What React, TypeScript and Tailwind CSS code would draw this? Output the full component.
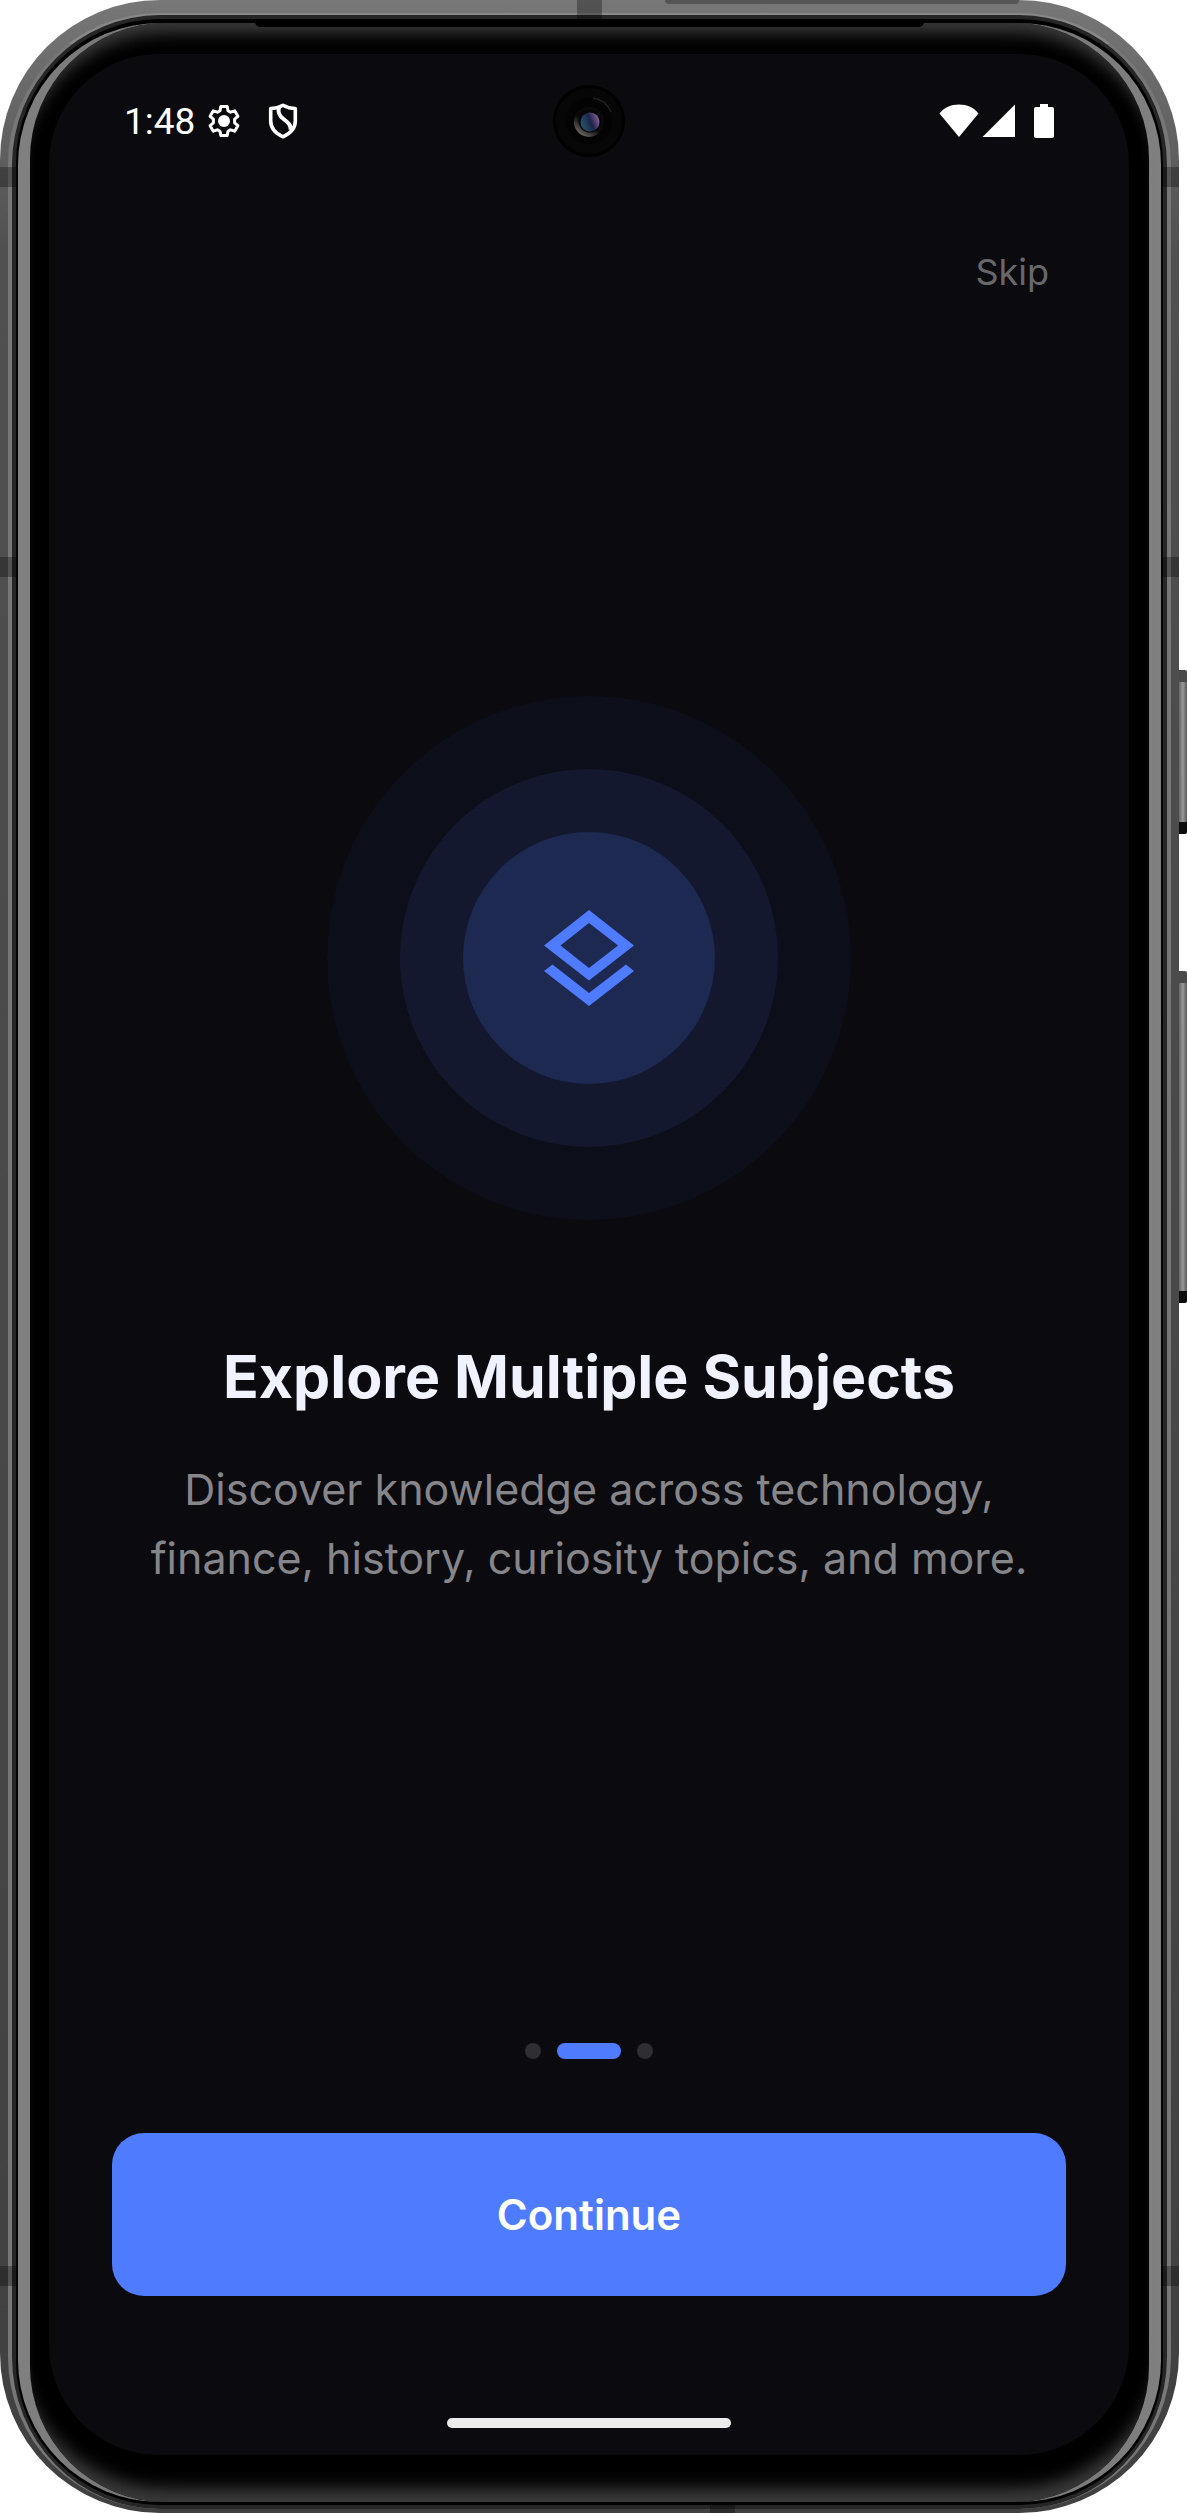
import React from 'react';

const GearIcon = () => (
  <svg width="34" height="34" viewBox="0 0 34 34" fill="none" aria-hidden="true">
    <path
      d="M13.800 2.500h6.400l.8 4.200 2.600 1.500 4.100-1.400 3.200 5.500-3.300 2.900v3.600l3.300 2.900-3.200 5.500-4.100-1.400-2.600 1.500-.8 4.200h-6.400l-.8-4.200-2.600-1.500-4.100 1.400-3.200-5.500 3.300-2.900v-3.600l-3.300-2.900 3.200-5.500 4.100 1.400L13 6.700z"
      stroke="white"
      strokeWidth="3"
      strokeLinejoin="round"
    />
    <circle cx="17" cy="17" r="6" fill="white" />
  </svg>
);

const ShieldIcon = () => (
  <svg width="30" height="36" viewBox="0 0 30 36" fill="none" aria-hidden="true">
    <path
      d="M15 2.200C19 4.500 23 5.500 27.300 5.500V18c0 7-5 12.500-12.300 15.800C7.700 30.500 2.700 25 2.700 18V5.500C7 5.500 11 4.500 15 2.200z"
      stroke="white"
      strokeWidth="3.600"
      strokeLinejoin="round"
    />
    <path d="M11 4c-1.500 6 .5 9 4.500 12s8 6 7 11" stroke="white" strokeWidth="4" />
  </svg>
);

const WifiIcon = () => (
  <svg width="40" height="34" viewBox="0 0 40 34" aria-hidden="true">
    <path d="M20 33 .5 9.500C5 3.500 12 .5 20 .5s15 3 19.500 9z" fill="white" />
  </svg>
);

const SignalIcon = () => (
  <svg width="33" height="34" viewBox="0 0 33 34" aria-hidden="true">
    <path d="M33 .5V33H.5z" fill="white" />
  </svg>
);

const BatteryIcon = () => (
  <svg width="20" height="34" viewBox="0 0 20 34" aria-hidden="true">
    <path d="M6 0h8v3h4a2 2 0 0 1 2 2v27a2 2 0 0 1-2 2H2a2 2 0 0 1-2-2V5a2 2 0 0 1 2-2h4z" fill="white" />
  </svg>
);

const LayersIcon = () => (
  <svg width="90" height="96" viewBox="0 0 90 96" aria-hidden="true">
    <path fillRule="evenodd" d="M45 0l45 35.500L45 70.500 0 35.500zM45 13L16.500 35.500 45 58l29-22.500z" fill="#4f7cff" />
    <path d="M8.500 54.500L45 83l37-28.500 8 6.500-45 35L0 61z" fill="#4f7cff" />
  </svg>
);

const Camera = () => (
  <svg width="72" height="72" viewBox="0 0 72 72" aria-hidden="true">
    <defs>
      <linearGradient id="lens" x1="0" y1="0.700" x2="1" y2="0.300">
        <stop offset="0" stopColor="#245a70" />
        <stop offset="0.550" stopColor="#1d2348" />
        <stop offset="1" stopColor="#8d62a0" />
      </linearGradient>
      <linearGradient id="rim" x1="0.200" y1="1" x2="0.700" y2="0.300">
        <stop offset="0" stopColor="#777470" />
        <stop offset="0.600" stopColor="#0a0a0a" />
      </linearGradient>
    </defs>
    <circle cx="36" cy="36" r="34.500" fill="#060606" stroke="#000000" strokeWidth="3" />
    <circle cx="36" cy="36" r="23" fill="#030303" />
    <path d="M40 13a23 23 0 0 1 18 14" fill="none" stroke="#222222" strokeWidth="1.500" />
    <circle cx="36" cy="37" r="15" fill="url(#rim)" />
    <circle cx="37" cy="36" r="11.500" fill="#050508" />
    <circle cx="37" cy="37" r="9.500" fill="url(#lens)" />
  </svg>
);

const StatusBar = () => (
  <div className="grid grid-cols-3 items-center px-[75px] pt-[31px]">
    <div className="flex items-center">
      <span className="font-[Roboto,sans-serif] text-[37px] leading-none text-white">1:48</span>
      <div className="ml-3 flex items-center gap-[27px]">
        <GearIcon />
        <ShieldIcon />
      </div>
    </div>
    <div className="flex justify-center">
      <Camera />
    </div>
    <div className="flex items-center justify-end">
      <WifiIcon />
      <div className="mr-[19px] ml-[3px]">
        <SignalIcon />
      </div>
      <BatteryIcon />
    </div>
  </div>
);

const Hero = () => (
  <div className="flex size-[524px] items-center justify-center rounded-full bg-[#0c0e19]">
    <div className="flex size-[378px] items-center justify-center rounded-full bg-[#13182e]">
      <div className="flex size-[252px] items-center justify-center rounded-full bg-[#1d2951]">
        <LayersIcon />
      </div>
    </div>
  </div>
);

const Screen = () => (
  <main className="flex grow flex-col rounded-[110px] bg-[#0a0a0f] font-[Inter,sans-serif]">
    <StatusBar />
    <div className="flex justify-end pt-[88px] pr-[80px]">
      <button type="button" className="text-[36px] leading-[54px] text-[#68686c]">
        Skip
      </button>
    </div>
    <section className="flex grow flex-col items-center pt-[397px] text-center">
      <Hero />
      <h1 className="mt-[115px] text-[59px] leading-[84px] font-bold text-[#f0f2ff]">Explore Multiple Subjects</h1>
      <p className="mt-[36px] text-[43px] leading-[69px] text-[#86868a]">
        Discover knowledge across technology,
        <br />
        finance, history, curiosity topics, and more.
      </p>
    </section>
    <div className="flex flex-col items-center px-[63px] pb-[27px]">
      <div className="flex gap-4">
        <span className="size-4 rounded-full bg-[#2f2f33]" />
        <span className="h-4 w-16 rounded-full bg-[#4f7cff]" />
        <span className="size-4 rounded-full bg-[#2f2f33]" />
      </div>
      <button
        type="button"
        className="mt-[74px] h-[163px] w-full rounded-[32px] bg-[#4f7cff] text-[42px] font-semibold text-white"
      >
        Continue
      </button>
      <div className="mt-[122px] h-[10px] w-[284px] rounded-full bg-[#ececec]" />
    </div>
  </main>
);

// Antenna break in the metal frame
const Seam = ({ className }: { className: string }) => (
  <span className={`absolute bg-black/30 ${className}`} />
);

const SideButton = ({ className }: { className: string }) => (
  <span
    className={`absolute right-0 w-2 rounded-r-xs border-y-[12px] border-t-[#4a4a4a] border-b-[#0c0c0c] bg-linear-to-r from-[#666666] via-[#999999] to-[#555555] ${className}`}
  />
);

export default function App() {
  return (
    <div className="relative flex min-h-screen bg-white pr-2">
      <SideButton className="top-[670px] h-[164px]" />
      <SideButton className="top-[971px] h-[332px]" />
      {/* Metal frame */}
      <div className="relative flex grow rounded-[160px] bg-linear-to-b from-[#777777] via-[#505050] via-10% to-[#404040] px-2 pt-[13px] pb-1">
        <div className="flex grow rounded-[152px] border-x-4 border-t-2 border-x-[#777777] border-t-[#888888] bg-[#262626] p-[4px]">
          <div className="flex grow rounded-[144px] bg-black px-[2px] pt-[4px] pb-[3px]">
            {/* Polished inner rim, tapering off towards the top and bottom */}
            <div className="flex grow rounded-[142px] bg-linear-to-r from-[#808080] via-[#555555] to-[#808080] px-3">
              <div className="flex grow rounded-[136px] bg-black pt-[31px] pr-[20px] pb-[47px] pl-[19px] shadow-[inset_0_22px_16px_-12px_#3a3a3a,inset_0_-26px_16px_-12px_#3a3a3a]">
                <Screen />
              </div>
            </div>
          </div>
        </div>
        {/* Earpiece slit */}
        <span className="absolute inset-x-[255px] top-[22px] h-[5px] rounded-b-md bg-black" />
        {/* Glass strip on the top edge */}
        <span className="absolute top-0 right-[160px] left-[665px] h-1 rounded-b-full bg-[#555555]" />
        <Seam className="top-0 left-[577px] h-5 w-[25px]" />
        <Seam className="bottom-0 left-[710px] h-2 w-[25px]" />
        <Seam className="top-[167px] left-0 h-5 w-4" />
        <Seam className="top-[167px] right-0 h-5 w-4" />
        <Seam className="top-[557px] left-0 h-5 w-4" />
        <Seam className="top-[557px] right-0 h-5 w-4" />
        <Seam className="top-[2266px] left-0 h-5 w-4" />
        <Seam className="top-[2266px] right-0 h-5 w-4" />
      </div>
    </div>
  );
}
